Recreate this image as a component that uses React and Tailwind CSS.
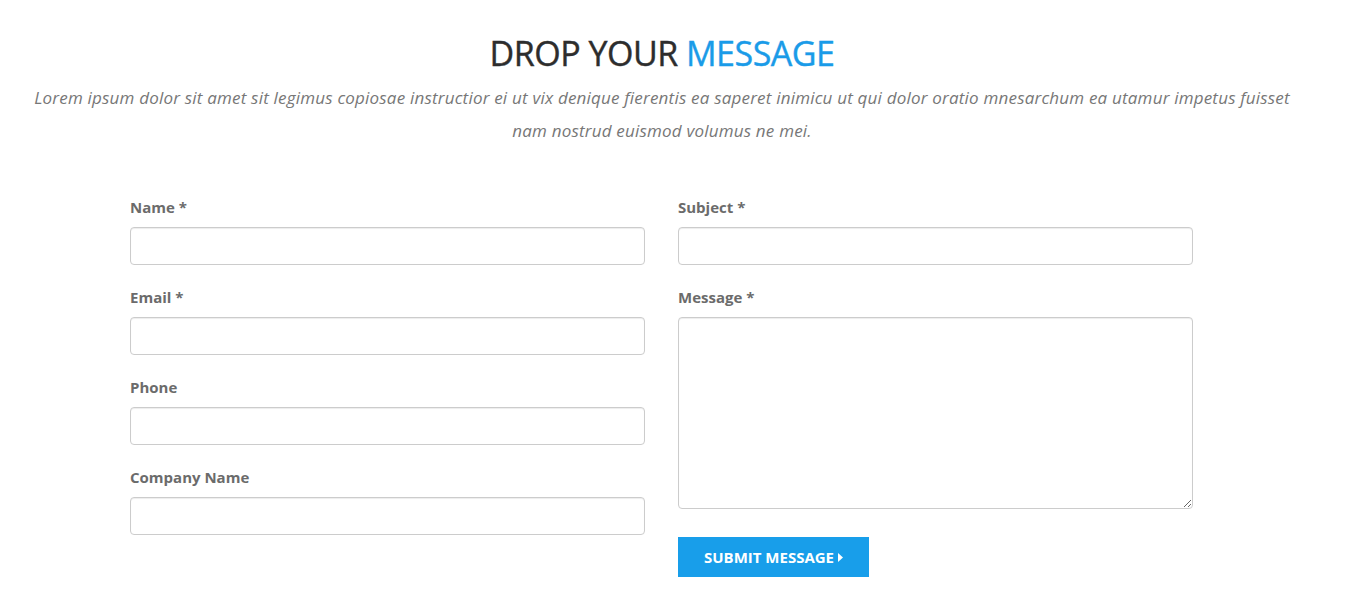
export default function App() {
  const font = { fontFamily: '"Open Sans", "Noto Sans", sans-serif' };
  const Field = ({ label, children }) => (
    <div className="flex flex-col">
      <label className="text-[15px] font-bold text-[#6b6b6b] leading-[20px] mb-[10px]">{label}</label>
      {children}
    </div>
  );
  const inputCls = "block w-full h-[38px] border border-[#cccccc] rounded-[4px] bg-white outline-none shadow-[inset_0_1px_1px_rgba(0,0,0,0.075)]";
  return (
    <div className="w-[1350px] h-[607px] bg-white" style={font}>
      <div className="w-[1324px] flex flex-col items-center pt-[30px]">
        <h1 className="text-[34px] leading-[46px] font-normal text-[#2d2d2d] tracking-[-0.5px] [-webkit-text-stroke:0.4px_currentColor]">
          DROP YOUR <span className="text-[#1a9be8]">MESSAGE</span>
        </h1>
        <p className="mt-[5px] w-[1270px] text-center italic text-[17px] leading-[33px] text-[#777777] tracking-[0.2px]">
          Lorem ipsum dolor sit amet sit legimus copiosae instructior ei ut vix denique fierentis ea saperet inimicu ut qui dolor oratio mnesarchum ea utamur impetus fuisset nam nostrud euismod volumus ne mei.
        </p>
      </div>
      <form className="ml-[130px] mt-[50px] flex gap-[33px]">
        <div className="w-[515px] flex flex-col gap-[22px]">
          <Field label="Name *"><input className={inputCls} /></Field>
          <Field label="Email *"><input className={inputCls} /></Field>
          <Field label="Phone"><input className={inputCls} /></Field>
          <Field label="Company Name"><input className={inputCls} /></Field>
        </div>
        <div className="w-[515px] flex flex-col">
          <Field label="Subject *"><input className={inputCls} /></Field>
          <div className="mt-[22px]">
            <Field label="Message *">
              <textarea className="block w-full h-[192px] border border-[#cccccc] rounded-[4px] bg-white outline-none resize-y shadow-[inset_0_1px_1px_rgba(0,0,0,0.075)]" />
            </Field>
          </div>
          <button type="button" className="mt-[28px] w-[191px] h-[40px] bg-[#189eea] text-white text-[15px] font-bold flex items-center justify-center gap-[4px]">
            SUBMIT MESSAGE
            <svg width="5" height="9" viewBox="0 0 5 9"><path d="M0 0 L5 4.5 L0 9 Z" fill="white" /></svg>
          </button>
        </div>
      </form>
    </div>
  );
}
